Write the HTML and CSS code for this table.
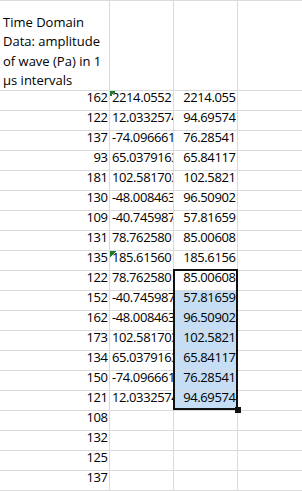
FILE: index.html
```html
<!DOCTYPE html>
<html lang="en">
<head>
<meta charset="utf-8">
<title>Sheet</title>
<link rel="stylesheet" href="styles.css">
</head>
<body>
<div class="sheet">
  <div class="cell head"><div class="wrap">Time Domain<br>Data: amplitude<br>of wave (Pa) in 1<br>µs intervals</div></div>
  <div class="cell head"></div>
  <div class="cell head"></div>
  <div class="cell head last"></div>

  <div class="cell num">162</div><div class="cell txt warn">2214.05521</div><div class="cell num">2214.055</div><div class="cell last"></div>
  <div class="cell num">122</div><div class="cell txt">12.0332574</div><div class="cell num">94.69574</div><div class="cell last"></div>
  <div class="cell num">137</div><div class="cell txt">-74.096661</div><div class="cell num">76.28541</div><div class="cell last"></div>
  <div class="cell num">93</div><div class="cell txt">65.0379163</div><div class="cell num">65.84117</div><div class="cell last"></div>
  <div class="cell num">181</div><div class="cell txt">102.581703</div><div class="cell num">102.5821</div><div class="cell last"></div>
  <div class="cell num">130</div><div class="cell txt">-48.008463</div><div class="cell num">96.50902</div><div class="cell last"></div>
  <div class="cell num">109</div><div class="cell txt">-40.745987</div><div class="cell num">57.81659</div><div class="cell last"></div>
  <div class="cell num">131</div><div class="cell txt">78.7625801</div><div class="cell num">85.00608</div><div class="cell last"></div>
  <div class="cell num">135</div><div class="cell txt warn">185.615601</div><div class="cell num">185.6156</div><div class="cell last"></div>
  <div class="cell num">122</div><div class="cell txt">78.7625801</div><div class="cell num">85.00608</div><div class="cell last"></div>
  <div class="cell num">152</div><div class="cell txt">-40.745987</div><div class="cell num sel">57.81659</div><div class="cell last"></div>
  <div class="cell num">162</div><div class="cell txt">-48.008463</div><div class="cell num sel">96.50902</div><div class="cell last"></div>
  <div class="cell num">173</div><div class="cell txt">102.581703</div><div class="cell num sel">102.5821</div><div class="cell last"></div>
  <div class="cell num">134</div><div class="cell txt">65.0379163</div><div class="cell num sel">65.84117</div><div class="cell last"></div>
  <div class="cell num">150</div><div class="cell txt">-74.096661</div><div class="cell num sel">76.28541</div><div class="cell last"></div>
  <div class="cell num">121</div><div class="cell txt">12.0332574</div><div class="cell num sel">94.69574</div><div class="cell last"></div>
  <div class="cell num">108</div><div class="cell"></div><div class="cell"></div><div class="cell last"></div>
  <div class="cell num">132</div><div class="cell"></div><div class="cell"></div><div class="cell last"></div>
  <div class="cell num">125</div><div class="cell"></div><div class="cell"></div><div class="cell last"></div>
  <div class="cell num">137</div><div class="cell"></div><div class="cell"></div><div class="cell last"></div>

  <div class="selection"><div class="handle"></div></div>
</div>
</body>
</html>
```

FILE: styles.css
```css
* {
  box-sizing: border-box;
}

html,
body {
  margin: 0;
  padding: 0;
  background: #ffffff;
}

body {
  font-family: "Open Sans", "Liberation Sans", sans-serif;
  font-size: 13px;
  color: #000000;
}

.sheet {
  position: relative;
  display: grid;
  grid-template-columns: 110px 64px 64px 64px;
  grid-template-rows: 91px;
  grid-auto-rows: 20px;
  width: 302px;
}

.cell {
  border-right: 1px solid #dadada;
  border-bottom: 1px solid #dadada;
  white-space: nowrap;
  line-height: 12px;
  padding: 0 2px;
}

.cell.last {
  border-right: none;
}

.head {
  border-top: 1px solid #dadada;
  display: flex;
  flex-direction: column;
  justify-content: flex-end;
  line-height: 19.2px;
  padding-left: 3px;
}

.num {
  text-align: right;
  letter-spacing: -0.4px;
  padding-right: 1.5px;
}

.txt {
  letter-spacing: -0.4px;
  overflow-x: clip;
  overflow-y: visible;
}

.warn {
  background: linear-gradient(135deg, #1f7a30 50%, transparent 50%) no-repeat 0 0 / 6px 6px;
}

.sel {
  background: #c5def5;
}

.selection {
  position: absolute;
  left: 173px;
  top: 269px;
  width: 65px;
  height: 141px;
  border: 2px solid #111111;
  pointer-events: none;
}

.handle {
  position: absolute;
  right: -5px;
  bottom: -5px;
  width: 6px;
  height: 6px;
  background: #111111;
}
```
